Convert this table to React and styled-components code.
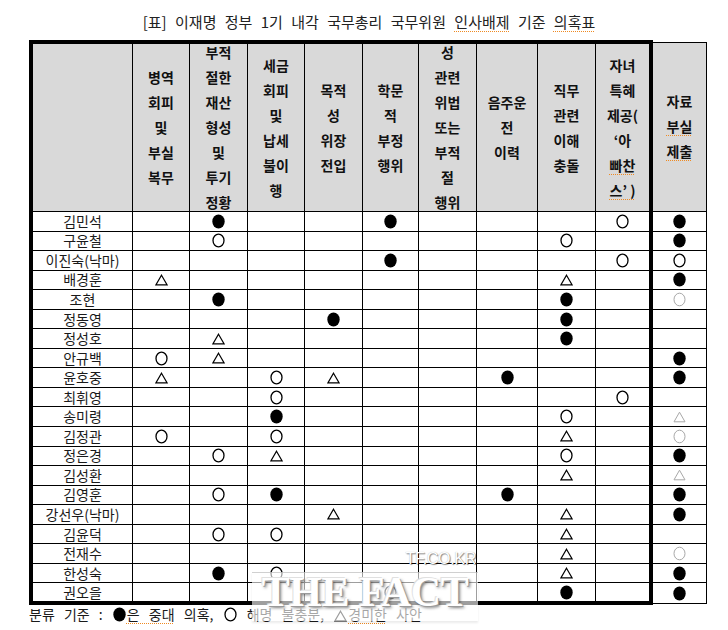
import React from 'react'
import styled, {createGlobalStyle, css} from 'styled-components'

const GlobalStyle = createGlobalStyle`
  html, body {
    margin: 0;
    padding: 0;
    background: #fff;
  }
  body {
    font-family: "Noto Sans CJK KR", "Noto Sans", sans-serif;
    color: #111;
  }
`

const Page = styled.div`
  position: relative;
  width: 728px;
  height: 630px;
  overflow: hidden;
`

const Title = styled.h1`
  margin: 0;
  padding: 11px 0 0 10px;
  text-align: center;
  font-size: 15px;
  font-weight: 400;
  line-height: 22px;
  word-spacing: 5px;
  color: #222;
`

const Spell = styled.span`
  text-decoration: underline dotted #ef8a22;
  text-decoration-thickness: 1px;
  text-underline-offset: 3px;
`

const Table = styled.table`
  border-collapse: collapse;
  table-layout: fixed;
  width: 678px;
  margin: 7px 0 0 29px;
`

const thick = '4px solid #000'
const thin = '1px solid #000'

const cellEdges = css`
  border: ${thin};
  ${p => p.$first && css`border-left: ${thick};`}
  ${p => p.$lastMain && css`border-right: ${thick};`}
`

const HeadCell = styled.th`
  ${cellEdges};
  border-top: ${p => (p.$outside ? thin : thick)};
  background: #d9d9d9;
  padding: 0;
  vertical-align: middle;
`

const HeadText = styled.div`
  height: 167px;
  display: flex;
  flex-direction: column;
  justify-content: center;
  align-items: center;
  overflow: hidden;
  font-size: 14px;
  font-weight: 700;
  line-height: 25px;
  color: #111;
  white-space: nowrap;
`

const Row = styled.tr`
  height: 19.55px;
`

const Cell = styled.td`
  ${cellEdges};
  ${p => p.$bottom && !p.$outside && css`border-bottom: ${thick};`}
  padding: 0;
  height: 18px;
  font-size: 14px;
  line-height: 17px;
  text-align: center;
  vertical-align: middle;
  overflow: hidden;
`

const Name = styled.span`
  display: block;
  font-size: 14px;
  line-height: 17px;
  color: #1a1a1a;
  white-space: nowrap;
`

const MarkSvg = styled.svg`
  display: ${p => (p.$inline ? 'inline-block' : 'block')};
  margin: ${p => (p.$inline ? '0 1px' : '0 auto')};
  vertical-align: ${p => (p.$inline ? '-2px' : 'middle')};
`

const Mark = ({type, inline}) => {
  const light = type === 'o' || type === 't'
  const color = light ? '#a8a8a8' : '#000'
  const t = type.toUpperCase()
  if (t === 'F') {
    return (
      <MarkSvg $inline={inline} width="13" height="15" viewBox="0 0 13 15">
        <ellipse cx="6.5" cy="7.5" rx="6.2" ry="6.9" fill="#000" />
      </MarkSvg>
    )
  }
  if (t === 'O') {
    return (
      <MarkSvg $inline={inline} width="13" height="15" viewBox="0 0 13 15">
        <ellipse cx="6.5" cy="7.5" rx="5.5" ry="6.3" fill="none" stroke={color} strokeWidth={light ? 1 : 1.3} />
      </MarkSvg>
    )
  }
  return (
    <MarkSvg $inline={inline} width="13" height="12" viewBox="0 0 13 12">
      <polygon points="6.5,1.2 12,10.8 1,10.8" fill="none" stroke={color} strokeWidth={light ? 1 : 1.2} />
    </MarkSvg>
  )
}

const Legend = styled.p`
  margin: 0;
  padding: 1px 0 0 29px;
  font-size: 14px;
  line-height: 17px;
  word-spacing: 6px;
  color: #1a1a1a;
`

const Watermark = styled.div`
  position: absolute;
  left: 252px;
  top: 550px;
  width: 226px;
  pointer-events: none;
  display: flex;
  flex-direction: column;
  align-items: flex-end;
`

const WmSite = styled.div`
  font-family: "Liberation Sans", Arial, sans-serif;
  font-size: 16px;
  line-height: 18px;
  letter-spacing: -0.3px;
  padding-right: 2px;
  color: #fff;
  text-shadow: 1px 1px 1px rgba(0, 0, 0, 0.45), 0 0 1px rgba(0, 0, 0, 0.3);
`

const WmPanel = styled.div`
  align-self: stretch;
  margin-top: 4px;
  height: 48px;
  border-top: 1px solid rgba(170, 170, 170, 0.55);
  background: rgba(255, 255, 255, 0.62);
  box-shadow: 0 2px 2px rgba(0, 0, 0, 0.08);
  text-align: center;
`

const WmName = styled.div`
  font-family: "Liberation Serif", "Times New Roman", serif;
  font-weight: 700;
  font-size: 42px;
  line-height: 38px;
  color: #fff;
  letter-spacing: -0.5px;
  text-shadow: 1px 1px 0 #9a9a9a, -1px -1px 0 #e0e0e0, 2px 2px 3px rgba(0, 0, 0, 0.5);
`

const columns = [
  {width: 101.5, lines: []},
  {width: 57, lines: ['병역', '회피', '및', '부실', '복무']},
  {width: 58, lines: ['부적', '절한', '재산', '형성', '및', '투기', '정황']},
  {width: 57, lines: ['세금', '회피', '및', '납세', '불이', '행']},
  {width: 58, lines: ['목적', '성', '위장', '전입']},
  {width: 56, lines: ['학문', '적', '부정', '행위']},
  {width: 58, lines: ['성', '관련', '위법', '또는', '부적', '절', '행위']},
  {width: 61, lines: ['음주운', '전', '이력']},
  {width: 58, lines: ['직무', '관련', '이해', '충돌']},
  {width: 55.5, lines: ['자녀', '특혜', '제공(', '‘아', <Spell key="a">빠찬</Spell>, <Spell key="b">스’ )</Spell>]},
  {width: 55.5, lines: ['자료', <Spell key="c">부실</Spell>, <Spell key="d">제출</Spell>]},
]

// F = ● / O = ○ / T = △, lowercase = light grey mark
const rows = [
  ['김민석', '.F..F...OF'],
  ['구윤철', '.O.....O.F'],
  ['이진숙(낙마)', '....F...OO'],
  ['배경훈', 'T......T.F'],
  ['조현', '.F.....F.o'],
  ['정동영', '...F...F..'],
  ['정성호', '.T.....F..'],
  ['안규백', 'OT.......F'],
  ['윤호중', 'T.OT..F..F'],
  ['최휘영', '..O.....O.'],
  ['송미령', '..F....O.t'],
  ['김정관', 'O.O....T.o'],
  ['정은경', '.OT....O.F'],
  ['김성환', '.......T.t'],
  ['김영훈', '.OF...F..F'],
  ['강선우(낙마)', '...T...T.F'],
  ['김윤덕', '.OO....T..'],
  ['전재수', '.......T.o'],
  ['한성숙', '.FO....T.F'],
  ['권오을', '....O..F.F'],
]

export default function App() {
  return (
    <Page>
      <GlobalStyle />
      <Title>
        [표] 이재명 정부 1기 내각 국무총리 국무위원 <Spell>인사배제</Spell> 기준 <Spell>의혹표</Spell>
      </Title>
      <Table>
        <colgroup>
          {columns.map((c, i) => (
            <col key={i} style={{width: c.width}} />
          ))}
        </colgroup>
        <thead>
          <tr>
            {columns.map((c, i) => (
              <HeadCell key={i} $first={i === 0} $lastMain={i === 9} $outside={i === 10}>
                <HeadText>
                  <div>
                    {c.lines.map((l, j) => (
                      <div key={j}>{l}</div>
                    ))}
                  </div>
                </HeadText>
              </HeadCell>
            ))}
          </tr>
        </thead>
        <tbody>
          {rows.map(([name, marks], r) => {
            const bottom = r === rows.length - 1
            return (
              <Row key={name}>
                <Cell $first $bottom={bottom}>
                  <Name>{name}</Name>
                </Cell>
                {marks.split('').map((m, i) => (
                  <Cell key={i} $lastMain={i === 8} $outside={i === 9} $bottom={bottom}>
                    {m !== '.' && <Mark type={m} />}
                  </Cell>
                ))}
              </Row>
            )
          })}
        </tbody>
      </Table>
      <Legend>
        분류 기준 : <Mark type="F" inline /><Spell>은 중대</Spell> 의혹, <Mark type="O" inline /> 해명 불충분,{' '}
        <Mark type="T" inline />
        <Spell>경미한</Spell> 사안
      </Legend>
      <Watermark>
        <WmSite>TF.CO.KR</WmSite>
        <WmPanel>
          <WmName>THE FACT</WmName>
        </WmPanel>
      </Watermark>
    </Page>
  )
}
